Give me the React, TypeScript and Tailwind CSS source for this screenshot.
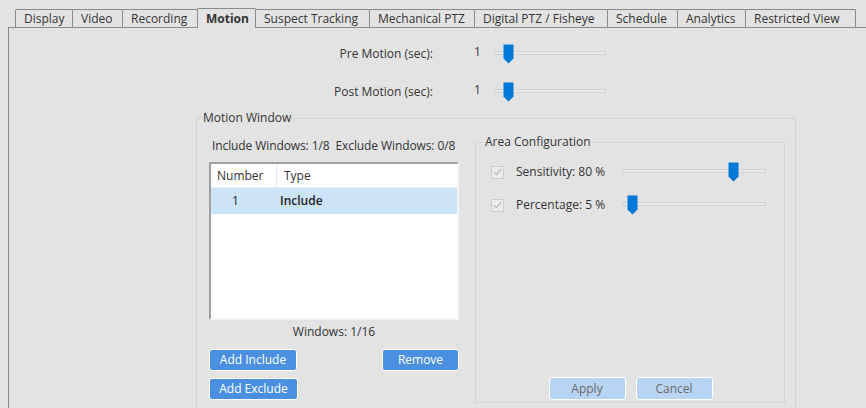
import React from 'react';

const tabs = [
  { name: 'Display', w: 'w-[58px]' },
  { name: 'Video', w: 'w-[51px]' },
  { name: 'Recording', w: 'w-[76px]' },
  { name: 'Motion', w: 'w-[59px]', active: true },
  { name: 'Suspect Tracking', w: 'w-[115px]' },
  { name: 'Mechanical PTZ', w: 'w-[106px]' },
  { name: 'Digital PTZ / Fisheye', w: 'w-[134px]' },
  { name: 'Schedule', w: 'w-[71px]' },
  { name: 'Analytics', w: 'w-[69px]' },
  { name: 'Restricted View', w: 'w-[111px]' },
];

const Thumb = () => (
  <svg width="11" height="20" viewBox="0 0 11 20">
    <path d="M0.5 0.5 H10.5 V14.5 L5.5 19.5 L0.5 14.5 Z" fill="#0078d7" />
  </svg>
);

// track with the blue thumb lying over it
const Slider = ({ width, pos }: { width: string; pos: number }) => (
  <div className={`relative h-[20px] ${width}`}>
    <div className="absolute left-0 right-0 top-[7px] h-[4px] bg-[#e9e9e9] border border-[#d2d2d2]" />
    <div className="absolute top-0" style={{ left: pos }}>
      <Thumb />
    </div>
  </div>
);

const Check = () => (
  <div className="w-[13px] h-[13px] border border-[#cdcdcd] bg-[#ececec] flex items-center justify-center">
    <svg width="9" height="8" viewBox="0 0 9 8">
      <path d="M0.8 4.2 L3.3 6.6 L8.2 1" fill="none" stroke="#b9b9b9" strokeWidth="1.2" />
    </svg>
  </div>
);

const BlueButton = ({ label, w }: { label: string; w: string }) => (
  <button className={`h-[22px] ${w} rounded-[3px] border border-white bg-[#4a8fe0] text-white text-[12px] leading-none`}>
    {label}
  </button>
);

const DimButton = ({ label }: { label: string }) => (
  <button className="h-[23px] w-[77px] rounded-[3px] border border-white bg-[#b7d4f3] text-[#6a6a6a] text-[12px] leading-none">
    {label}
  </button>
);

export default function App() {
  return (
    <div
      className="w-[866px] h-[408px] overflow-hidden bg-[#e3e3e3] text-[#333] text-[12px] leading-[16px]"
      style={{ fontFamily: '"Segoe UI", "Open Sans", "Noto Sans", sans-serif' }}
    >
      {/* Tabs */}
      <div className="flex items-end h-[27px] pl-[15px]">
        {tabs.map((t, i) =>
          t.active ? (
            <div
              key={t.name}
              className={`relative z-10 -ml-px -mb-px h-[20px] ${t.w} bg-[#e3e3e3] border border-b-0 border-[#8a8a8a] rounded-t-[2px] pl-[8px] pt-[2px] font-bold`}
            >
              {t.name}
            </div>
          ) : (
            <div
              key={t.name}
              className={`${i > 0 ? '-ml-px' : ''} h-[18px] ${t.w} border border-b-0 border-[#8a8a8a] rounded-t-[2px] pl-[8px] pt-px`}
            >
              {t.name}
            </div>
          )
        )}
      </div>

      {/* Tab panel */}
      <div className="ml-[8px] h-[381px] border-l border-t border-[#8a8a8a] pt-[16px]">
        <div className="flex items-center h-[20px]">
          <div className="w-[424px] text-right">Pre Motion (sec):</div>
          <div className="ml-[41px] w-[7px] pb-[4px]">1</div>
          <div className="ml-[13px]">
            <Slider width="w-[112px]" pos={9} />
          </div>
        </div>
        <div className="flex items-center h-[20px] mt-[18px]">
          <div className="w-[424px] text-right">Post Motion (sec):</div>
          <div className="ml-[41px] w-[7px] pb-[4px]">1</div>
          <div className="ml-[13px]">
            <Slider width="w-[112px]" pos={9} />
          </div>
        </div>

        <fieldset className="ml-[187px] mt-[8px] w-[600px] h-[320px] border border-[#d4d4d4]">
          <legend className="ml-[5px] px-[1px] leading-[16px]">Motion Window</legend>
          <div className="flex">
            {/* Left column */}
            <div className="ml-[12px] w-[250px]">
              <div className="mt-[12px] pl-[3px] whitespace-nowrap tracking-[-0.1px]">
                Include Windows: 1/8&nbsp; Exclude Windows: 0/8
              </div>
              <div className="mt-[8px] h-[158px] border-2 border-t-[#a0a0a0] border-l-[#a0a0a0] border-r-[#f4f4f4] border-b-[#f4f4f4] bg-white">
                <div className="flex h-[24px] items-center border-b border-[#efefef]">
                  <div className="w-[66px] h-full flex items-center pl-[6px] border-r border-[#e5e5e5]">Number</div>
                  <div className="pl-[7px]">Type</div>
                </div>
                <div className="flex h-[26px] items-center bg-[#cce4f7] text-[#1e1e1e]">
                  <div className="w-[66px] pl-[21px]">1</div>
                  <div className="pl-[3px] font-semibold">Include</div>
                </div>
              </div>
              <div className="mt-[4px] text-center">Windows: 1/16</div>
              <div className="mt-[9px] flex justify-between">
                <BlueButton label="Add Include" w="w-[88px]" />
                <BlueButton label="Remove" w="w-[77px]" />
              </div>
              <div className="mt-[7px]">
                <BlueButton label="Add Exclude" w="w-[89px]" />
              </div>
            </div>

            {/* Right column */}
            <fieldset className="ml-[16px] mt-[8px] w-[310px] border border-[#d4d4d4]">
              <legend className="ml-[8px] px-[1px] leading-[16px]">Area Configuration</legend>
              <div className="h-[252px] flex flex-col">
                <div className="mt-[12px] flex items-center h-[20px]">
                  <div className="ml-[15px]">
                    <Check />
                  </div>
                  <div className="ml-[12px] w-[106px]">Sensitivity: 80 %</div>
                  <Slider width="w-[144px]" pos={106} />
                </div>
                <div className="mt-[13px] flex items-center h-[20px]">
                  <div className="ml-[15px]">
                    <Check />
                  </div>
                  <div className="ml-[12px] w-[106px]">Percentage: 5 %</div>
                  <Slider width="w-[144px]" pos={5} />
                </div>
                <div className="flex-1" />
                <div className="flex justify-center gap-[10px] pb-[2px] pl-[1px]">
                  <DimButton label="Apply" />
                  <DimButton label="Cancel" />
                </div>
              </div>
            </fieldset>
          </div>
        </fieldset>
      </div>
    </div>
  );
}
